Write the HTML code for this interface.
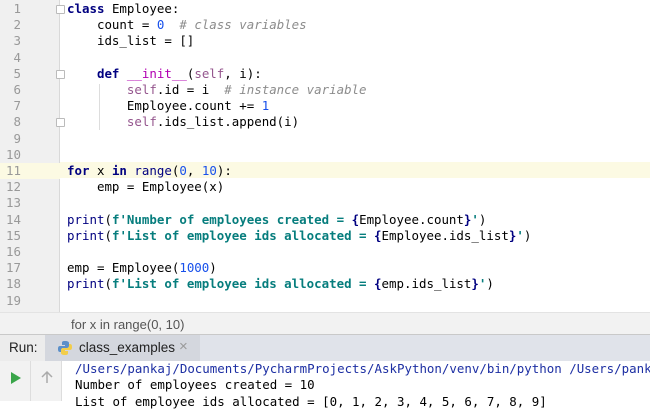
<!DOCTYPE html>
<html><head><style>
*{margin:0;padding:0;box-sizing:border-box}
body{width:650px;height:400px;overflow:hidden;background:#fff;position:relative;font-family:"DejaVu Sans Mono",monospace}
.gut{position:absolute;left:0;top:0;width:60px;height:312px;background:#f0f0f0;border-right:1px solid #d9d9d9}
.ln{position:absolute;left:0;width:21px;text-align:right;font-size:12.45px;color:#999;line-height:16.2px}
.cl{position:absolute;left:67px;font-size:12.45px;line-height:16.2px;white-space:pre;color:#000}
.hl{position:absolute;left:0;width:650px;top:162px;height:16.2px;background:#fcfae3}
.k{color:#000080;font-weight:bold}.n{color:#1750eb}.c{color:#8c8c8c;font-style:italic}
.s{color:#067d7d;font-weight:bold}.b{color:#000080;font-weight:bold}.sf{color:#94558d}.m{color:#b200b2}
.bi{color:#000080}
.fold{position:absolute;left:56px;width:9px;height:9px;border:1px solid #bbb;background:#fff;border-radius:1px}
.bc{position:absolute;top:312px;left:0;width:650px;height:23px;background:#f2f2f2;border-top:1px solid #e3e3e3;border-bottom:1px solid #c9c9c9;font-family:"Liberation Sans",sans-serif;font-size:13px;color:#555;padding:4px 0 0 71px}
.run{position:absolute;top:335px;left:0;width:650px;height:26px;background:#e0e3ea;font-family:"Liberation Sans",sans-serif;font-size:13.5px;color:#222}
.con{position:absolute;top:361px;left:0;width:650px;height:40px;background:#fff}
</style></head><body>
<div class="hl"></div>
<div class="gut"></div>
<div class="ln" style="top:1px">1</div><div class="ln" style="top:17.2px">2</div><div class="ln" style="top:33.4px">3</div><div class="ln" style="top:49.6px">4</div><div class="ln" style="top:65.8px">5</div><div class="ln" style="top:82px">6</div><div class="ln" style="top:98.2px">7</div><div class="ln" style="top:114.4px">8</div><div class="ln" style="top:130.6px">9</div><div class="ln" style="top:146.8px">10</div><div class="ln" style="top:163px;background:#fcfae3;width:60px;padding-right:39px">11</div><div class="ln" style="top:179.2px">12</div><div class="ln" style="top:195.4px">13</div><div class="ln" style="top:211.6px">14</div><div class="ln" style="top:227.8px">15</div><div class="ln" style="top:244px">16</div><div class="ln" style="top:260.2px">17</div><div class="ln" style="top:276.4px">18</div><div class="ln" style="top:292.6px">19</div>
<div class="fold" style="top:5px"></div><div class="fold" style="top:70px"></div><div class="fold" style="top:118px"></div>
<div style="position:absolute;left:99px;top:84px;width:1px;height:46px;background:#ddd"></div>
<div class="cl" style="top:1px"><span class="k">class</span> Employee:</div>
<div class="cl" style="top:17.2px">    count = <span class="n">0</span>  <span class="c"># class variables</span></div>
<div class="cl" style="top:33.4px">    ids_list = []</div>
<div class="cl" style="top:65.8px">    <span class="k">def</span> <span class="m">__init__</span>(<span class="sf">self</span>, i):</div>
<div class="cl" style="top:82px">        <span class="sf">self</span>.id = i  <span class="c"># instance variable</span></div>
<div class="cl" style="top:98.2px">        Employee.count += <span class="n">1</span></div>
<div class="cl" style="top:114.4px">        <span class="sf">self</span>.ids_list.append(i)</div>
<div class="cl" style="top:163px"><span class="k">for</span> x <span class="k">in</span> <span class="bi">range</span>(<span class="n">0</span>, <span class="n">10</span>):</div>
<div class="cl" style="top:179.2px">    emp = Employee(x)</div>
<div class="cl" style="top:211.6px"><span class="bi">print</span>(<span class="s">f'Number of employees created = </span><span class="b">{</span>Employee.count<span class="b">}</span><span class="s">'</span>)</div>
<div class="cl" style="top:227.8px"><span class="bi">print</span>(<span class="s">f'List of employee ids allocated = </span><span class="b">{</span>Employee.ids_list<span class="b">}</span><span class="s">'</span>)</div>
<div class="cl" style="top:260.2px">emp = Employee(<span class="n">1000</span>)</div>
<div class="cl" style="top:276.4px"><span class="bi">print</span>(<span class="s">f'List of employee ids allocated = </span><span class="b">{</span>emp.ids_list<span class="b">}</span><span class="s">'</span>)</div>
<div class="bc">for x in range(0, 10)</div>
<div class="run">
<div style="position:absolute;left:0;top:0;width:45px;height:26px;background:#ececec"></div>
<div style="position:absolute;left:9px;top:5px">Run:</div>
<div style="position:absolute;left:45px;top:0;width:155px;height:26px;background:#d4d7de"></div>
<svg style="position:absolute;left:57px;top:5px" width="16" height="16" viewBox="0 0 16 16"><path d="M8 1c-3 0-3 1-3 2v2h3v1H3C1 6 1 8 1 9s0 3 2 3h1v-2c0-1 1-2 2-2h4c1 0 2-1 2-2V3c0-1-1-2-4-2z" fill="#5b8fc9"/><path d="M8 15c3 0 3-1 3-2v-2H8v-1h5c2 0 2-2 2-3s0-3-2-3h-1v2c0 1-1 2-2 2H6c-1 0-2 1-2 2v3c0 1 1 2 4 2z" fill="#f2cd4a"/></svg>
<div style="position:absolute;left:79px;top:5px">class_examples</div>
<div style="position:absolute;left:179px;top:3px;color:#999;font-size:15px">×</div>
</div>
<div class="con">
<div style="position:absolute;left:0;top:0;width:31px;height:40px;background:#f2f2f2;border-right:1px solid #ddd"></div>
<div style="position:absolute;left:31px;top:0;width:31px;height:40px;background:#f2f2f2;border-right:1px solid #ddd"></div>
<svg style="position:absolute;left:10px;top:10px" width="12" height="14"><path d="M1 1L11 7L1 13Z" fill="#3aa54a"/></svg>
<svg style="position:absolute;left:40px;top:9px" width="14" height="14"><path d="M7 13V2M2 7L7 2L12 7" stroke="#aaa" stroke-width="1.5" fill="none"/></svg>
<div class="cl" style="left:75px;top:0;color:#1d2fa3">/Users/pankaj/Documents/PycharmProjects/AskPython/venv/bin/python /Users/pankaj</div>
<div class="cl" style="left:75px;top:16px">Number of employees created = 10</div>
<div class="cl" style="left:75px;top:33px">List of employee ids allocated = [0, 1, 2, 3, 4, 5, 6, 7, 8, 9]</div>
</div>
</body></html>
